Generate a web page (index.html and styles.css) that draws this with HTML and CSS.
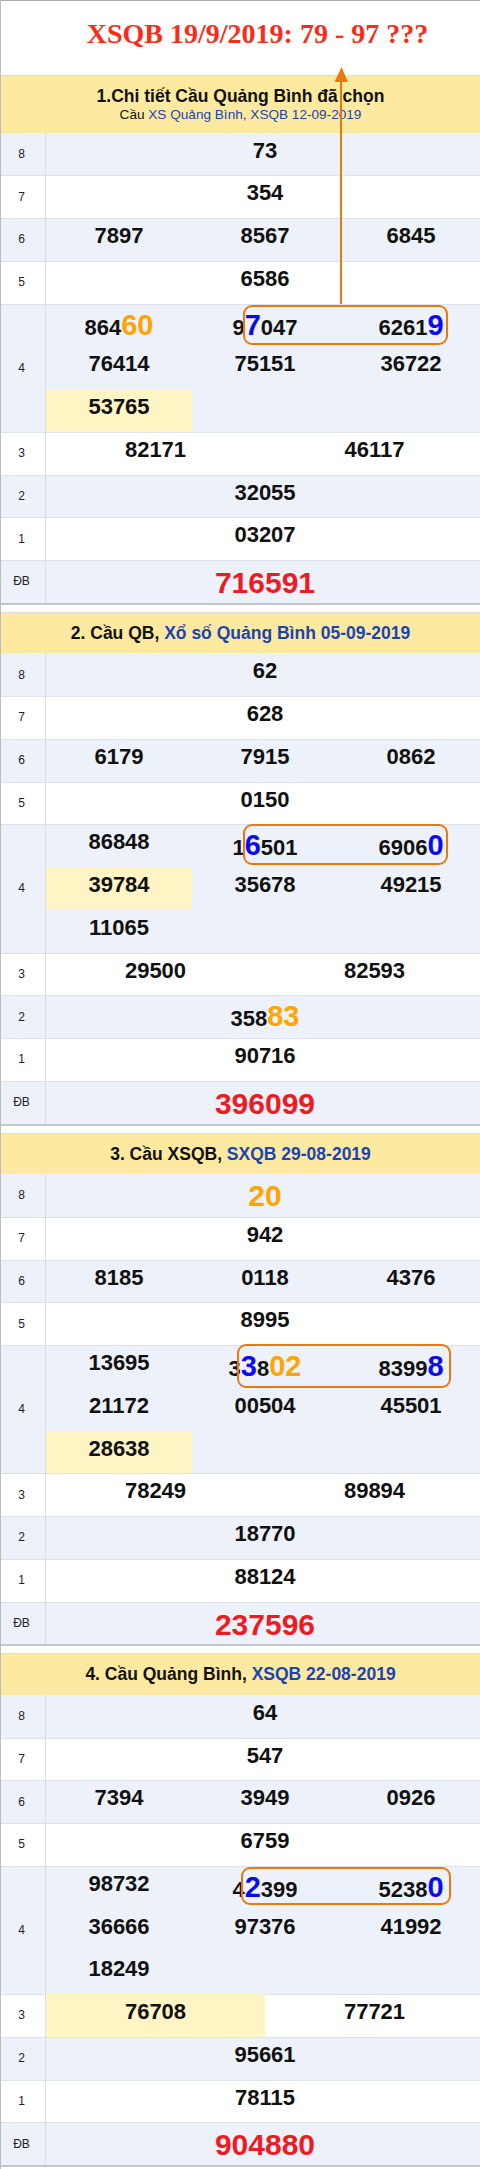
FILE: index.html
```html
<!DOCTYPE html>
<html lang="vi">
<head>
<meta charset="utf-8">
<title>XSQB 19/9/2019</title>
<link rel="stylesheet" href="styles.css">
</head>
<body>
<div class="page">
  <div class="title">XSQB 19/9/2019: 79 - 97 ???</div>

  <section class="sec">
    <div class="hdr hdr-first">
      <div class="hdr-main">1.Chi tiết Cầu Quảng Bình đã chọn</div>
      <div class="hdr-sub">Cầu <span class="lnk">XS Quảng Bình, XSQB 12-09-2019</span></div>
    </div>
    <div class="tbl">
      <div class="row b"><div class="lbl">8</div><div class="val g1"><div class="cell">73</div></div></div>
      <div class="row"><div class="lbl">7</div><div class="val g1"><div class="cell">354</div></div></div>
      <div class="row b"><div class="lbl">6</div><div class="val g3"><div class="cell">7897</div><div class="cell">8567</div><div class="cell">6845</div></div></div>
      <div class="row"><div class="lbl">5</div><div class="val g1"><div class="cell">6586</div></div></div>
      <div class="row b r4"><div class="lbl">4</div><div class="val g3">
        <div class="cell">864<span class="o">60</span></div><div class="cell">9<span class="u">7</span>047</div><div class="cell">6261<span class="u">9</span></div>
        <div class="cell">76414</div><div class="cell">75151</div><div class="cell">36722</div>
        <div class="cell y">53765</div>
      </div><div class="box box1"></div></div>
      <div class="row"><div class="lbl">3</div><div class="val g2"><div class="cell">82171</div><div class="cell">46117</div></div></div>
      <div class="row b"><div class="lbl">2</div><div class="val g1"><div class="cell">32055</div></div></div>
      <div class="row"><div class="lbl">1</div><div class="val g1"><div class="cell">03207</div></div></div>
      <div class="row b"><div class="lbl">ĐB</div><div class="val g1"><div class="cell db">716591</div></div></div>
    </div>
  </section>

  <section class="sec">
    <div class="hdr">2. Cầu QB, <span class="lnk">Xổ số Quảng Bình 05-09-2019</span></div>
    <div class="tbl">
      <div class="row b"><div class="lbl">8</div><div class="val g1"><div class="cell">62</div></div></div>
      <div class="row"><div class="lbl">7</div><div class="val g1"><div class="cell">628</div></div></div>
      <div class="row b"><div class="lbl">6</div><div class="val g3"><div class="cell">6179</div><div class="cell">7915</div><div class="cell">0862</div></div></div>
      <div class="row"><div class="lbl">5</div><div class="val g1"><div class="cell">0150</div></div></div>
      <div class="row b r4"><div class="lbl">4</div><div class="val g3">
        <div class="cell">86848</div><div class="cell">1<span class="u">6</span>501</div><div class="cell">6906<span class="u">0</span></div>
        <div class="cell y">39784</div><div class="cell">35678</div><div class="cell">49215</div>
        <div class="cell">11065</div>
      </div><div class="box box2"></div></div>
      <div class="row"><div class="lbl">3</div><div class="val g2"><div class="cell">29500</div><div class="cell">82593</div></div></div>
      <div class="row b"><div class="lbl">2</div><div class="val g1"><div class="cell">358<span class="o">83</span></div></div></div>
      <div class="row"><div class="lbl">1</div><div class="val g1"><div class="cell">90716</div></div></div>
      <div class="row b"><div class="lbl">ĐB</div><div class="val g1"><div class="cell db">396099</div></div></div>
    </div>
  </section>

  <section class="sec">
    <div class="hdr">3. Cầu XSQB, <span class="lnk">SXQB 29-08-2019</span></div>
    <div class="tbl">
      <div class="row b"><div class="lbl">8</div><div class="val g1"><div class="cell"><span class="o ob">20</span></div></div></div>
      <div class="row"><div class="lbl">7</div><div class="val g1"><div class="cell">942</div></div></div>
      <div class="row b"><div class="lbl">6</div><div class="val g3"><div class="cell">8185</div><div class="cell">0118</div><div class="cell">4376</div></div></div>
      <div class="row"><div class="lbl">5</div><div class="val g1"><div class="cell">8995</div></div></div>
      <div class="row b r4"><div class="lbl">4</div><div class="val g3">
        <div class="cell">13695</div><div class="cell">3<span class="u">3</span>8<span class="o">02</span></div><div class="cell">8399<span class="u">8</span></div>
        <div class="cell">21172</div><div class="cell">00504</div><div class="cell">45501</div>
        <div class="cell y">28638</div>
      </div><div class="box box3"></div></div>
      <div class="row"><div class="lbl">3</div><div class="val g2"><div class="cell">78249</div><div class="cell">89894</div></div></div>
      <div class="row b"><div class="lbl">2</div><div class="val g1"><div class="cell">18770</div></div></div>
      <div class="row"><div class="lbl">1</div><div class="val g1"><div class="cell">88124</div></div></div>
      <div class="row b"><div class="lbl">ĐB</div><div class="val g1"><div class="cell db">237596</div></div></div>
    </div>
  </section>

  <section class="sec last">
    <div class="hdr">4. Cầu Quảng Bình, <span class="lnk">XSQB 22-08-2019</span></div>
    <div class="tbl">
      <div class="row b"><div class="lbl">8</div><div class="val g1"><div class="cell">64</div></div></div>
      <div class="row"><div class="lbl">7</div><div class="val g1"><div class="cell">547</div></div></div>
      <div class="row b"><div class="lbl">6</div><div class="val g3"><div class="cell">7394</div><div class="cell">3949</div><div class="cell">0926</div></div></div>
      <div class="row"><div class="lbl">5</div><div class="val g1"><div class="cell">6759</div></div></div>
      <div class="row b r4"><div class="lbl">4</div><div class="val g3">
        <div class="cell">98732</div><div class="cell">4<span class="u">2</span>399</div><div class="cell">5238<span class="u">0</span></div>
        <div class="cell">36666</div><div class="cell">97376</div><div class="cell">41992</div>
        <div class="cell">18249</div>
      </div><div class="box box4"></div></div>
      <div class="row"><div class="lbl">3</div><div class="val g2"><div class="cell y">76708</div><div class="cell">77721</div></div></div>
      <div class="row b"><div class="lbl">2</div><div class="val g1"><div class="cell">95661</div></div></div>
      <div class="row"><div class="lbl">1</div><div class="val g1"><div class="cell">78115</div></div></div>
      <div class="row b"><div class="lbl">ĐB</div><div class="val g1"><div class="cell db">904880</div></div></div>
    </div>
  </section>

  <svg class="arrow" width="16" height="240" viewBox="0 0 16 240" aria-hidden="true">
    <line x1="8" y1="12" x2="8" y2="238" stroke="#e8790f" stroke-width="2"/>
    <polygon points="8.5,1 15,16 1.5,16" fill="#e8790f"/>
  </svg>
</div>
</body>
</html>
```

FILE: styles.css
```css
* {
  box-sizing: border-box;
  margin: 0;
  padding: 0;
}

html, body {
  width: 480px;
  background: #fff;
  overflow: hidden;
}

body {
  font-family: "Liberation Sans", Arial, sans-serif;
  color: #111;
}

.page {
  position: relative;
  width: 480px;
  height: 2169px;
  overflow: hidden;
  border-left: 1px solid #bcbcbc;
}

.title {
  height: 75px;
  border-top: 1px solid #acacac;
  padding: 18.5px 0 0 34px;
  text-align: center;
  font-family: "Liberation Serif", "Times New Roman", serif;
  font-weight: bold;
  font-size: 28px;
  line-height: 1;
  color: #fb2b18;
  white-space: nowrap;
}

.hdr {
  height: 41.5px;
  width: 479px;
  border-top: 1px solid #dcdcdc;
  background: #fee9a0;
  text-align: center;
  font-weight: bold;
  font-size: 17.5px;
  line-height: 40.5px;
  white-space: nowrap;
}

.hdr-first {
  height: 57.5px;
  padding-top: 9.6px;
  line-height: 20px;
}

.hdr-sub {
  font-weight: normal;
  font-size: 13.6px;
  line-height: 17px;
}

.lnk {
  color: #1a44b4;
}

.tbl {
  width: 484px;
  border-bottom: 2px solid #c3c6cd;
  margin-bottom: 7px;
}

.last .tbl {
  margin-bottom: 0;
}

.row {
  position: relative;
  display: flex;
  height: 42.75px;
  background: #fff;
  box-shadow: inset 0 1px 0 #dde1ea;
}

.row:first-child {
  box-shadow: none;
}

.row.b {
  background: #edf1fa;
}

.row.r4 {
  height: 128.25px;
}

.lbl {
  flex: none;
  width: 45px;
  border-right: 1px solid #d8dce5;
  padding-right: 3px;
  display: flex;
  align-items: center;
  justify-content: center;
  font-size: 12px;
  color: #222;
}

.val {
  flex: none;
  width: 438px;
  display: grid;
  grid-auto-rows: 42.75px;
}

.g1 { grid-template-columns: 1fr; }
.g2 { grid-template-columns: 1fr 1fr; }
.g3 { grid-template-columns: 1fr 1fr 1fr; }

.cell {
  height: 42.75px;
  padding-top: 7px;
  text-align: center;
  font-weight: bold;
  font-size: 22px;
  line-height: 1;
  white-space: nowrap;
  color: #111;
}

.cell.y {
  background: #fff4c4;
}

.cell.db {
  padding-top: 8px;
  font-size: 30px;
  color: #ec1c24;
}

.o {
  font-size: 29px;
  font-weight: bold;
  color: #ffa400;
}

.o.ob {
  font-size: 30px;
}

.u {
  font-size: 29px;
  font-weight: bold;
  color: #0b0bf3;
}

.box {
  position: absolute;
  border: 2px solid #e8790f;
  border-radius: 9px;
}

.box1 { left: 242px; top: 1px; width: 205px; height: 40px; }
.box2 { left: 242px; top: 0; width: 205px; height: 41px; }
.box3 { left: 236px; top: -1px; width: 214px; height: 44px; }
.box4 { left: 240px; top: 1px; width: 210px; height: 38px; }

.arrow {
  position: absolute;
  left: 332px;
  top: 66px;
}
```
